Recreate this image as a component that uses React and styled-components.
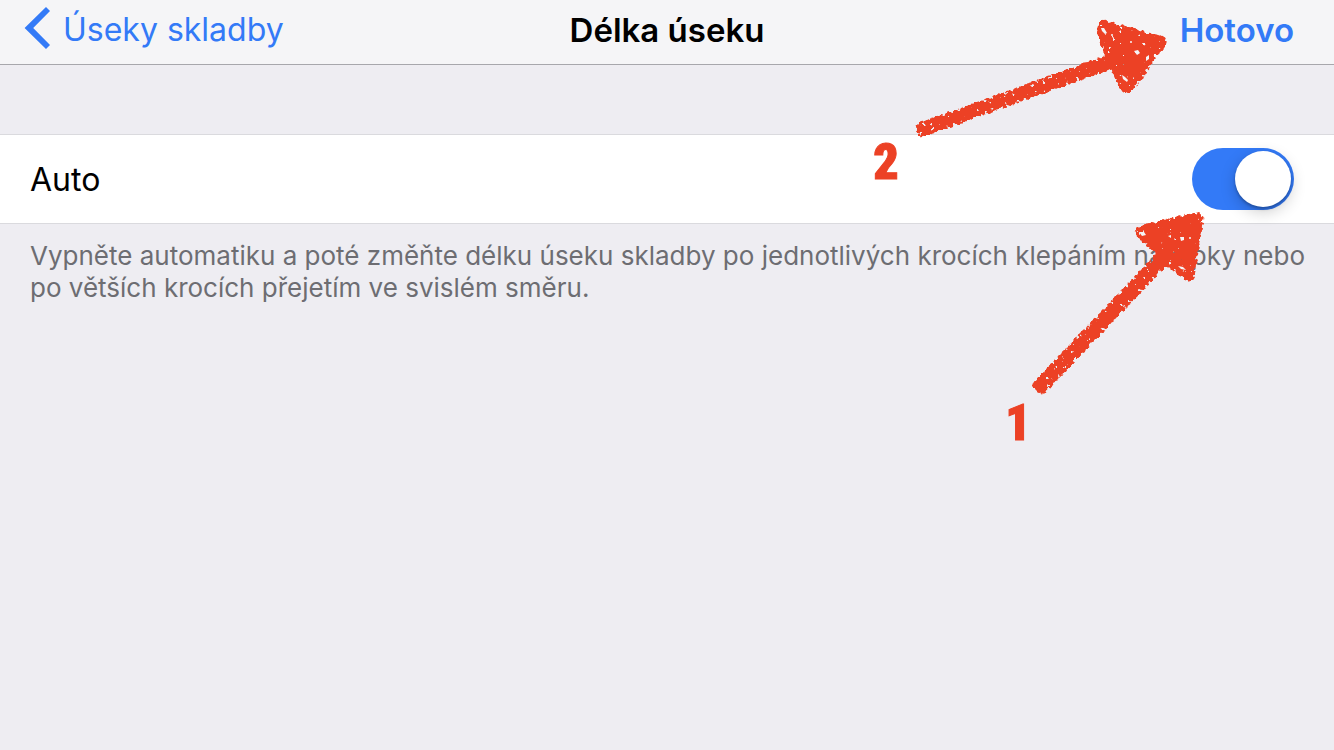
import React, { useState } from 'react';
import styled, { createGlobalStyle } from 'styled-components';

const GlobalStyle = createGlobalStyle`
  * {
    box-sizing: border-box;
  }
  body {
    margin: 0;
    background-color: #eeedf2;
    font-family: Inter, 'Liberation Sans', sans-serif;
  }
`;

const Page = styled.div`
  position: relative;
  min-height: 100vh;
  overflow: hidden;
`;
const NavBar = styled.header`
  display: grid;
  grid-template-columns: 1fr auto 1fr;
  align-items: center;
  padding: 0 24px 4px;
  height: 65px;
  background-color: #f5f5f7;
  border-bottom: 1px solid #a7a7ac;
`;
const NavButton = styled.button`
  display: flex;
  align-items: center;
  gap: 12px;
  justify-self: ${(props) => props.$side};
  padding: 0 ${(props) => (props.$side === 'end' ? 16 : 0)}px 0 0;
  border: none;
  background: none;
  color: #337af7;
  font-family: inherit;
  font-size: ${(props) => (props.$bold ? 33 : 32)}px;
  font-weight: ${(props) => (props.$bold ? 600 : 400)};
  line-height: 40px;
  white-space: nowrap;
  cursor: pointer;

  svg {
    margin-bottom: 4px;
  }
`;
const Title = styled.h1`
  margin: 0;
  color: #000;
  font-size: 33px;
  font-weight: 600;
  line-height: 40px;
`;
const Row = styled.label`
  display: flex;
  align-items: center;
  justify-content: space-between;
  margin-top: 69px;
  padding: 0 40px 0 30px;
  height: 90px;
  background-color: #fff;
  border-top: 1px solid #dadade;
  border-bottom: 1px solid #dadade;
  color: #000;
  font-size: 32px;
`;
const Switch = styled.input`
  appearance: none;
  display: flex;
  justify-content: ${(props) => (props.checked ? 'flex-end' : 'flex-start')};
  margin: 0;
  padding: 3px;
  width: 102px;
  height: 62px;
  border-radius: 31px;
  background-color: ${(props) => (props.checked ? '#337af7' : '#e5e5ea')};
  cursor: pointer;

  &::before {
    content: '';
    width: 56px;
    height: 56px;
    border-radius: 50%;
    background-color: #fff;
    box-shadow: 0 5px 16px rgba(0, 0, 0, 0.2), 0 2px 3px rgba(0, 0, 0, 0.25);
  }
`;
const Note = styled.p`
  margin: 0;
  padding: 16px 24px 16px 30px;
  color: #6d6d72;
  font-size: 26px;
  line-height: 32px;
`;
const Marks = styled.svg`
  position: absolute;
  top: 0;
  right: 0;
  pointer-events: none;
`;
const Digit = styled.text`
  fill: #ec4125;
  stroke: #ec4125;
  stroke-width: 1px;
  font-family: 'Roboto Condensed', 'Open Sans Condensed', Roboto, sans-serif;
  font-size: 50px;
  font-weight: 900;
  text-anchor: middle;
`;

function Chevron() {
  return (
    <svg width="27" height="42" viewBox="0 0 27 42" aria-hidden="true">
      <path d="M22 0 26 4 9.2 21 26 38 22 42 .6 21Z" fill="#337af7" />
    </svg>
  );
}

// Hand drawn arrows and step numbers, pinned to the right edge with the controls
function Annotations() {
  return (
    <Marks width="480" height="460" viewBox="854 0 480 460">
      <defs>
        <filter
          id="crayon"
          filterUnits="userSpaceOnUse"
          x="854"
          y="0"
          width="480"
          height="460"
          colorInterpolationFilters="sRGB"
        >
          <feGaussianBlur in="SourceAlpha" stdDeviation="2.4" result="soft" />
          <feTurbulence
            type="fractalNoise"
            baseFrequency="0.26"
            numOctaves="2"
            seed="8"
          />
          <feColorMatrix
            values="0 0 0 0 0  0 0 0 0 0  0 0 0 0 0  0 0 0 1 0"
            result="noise"
          />
          <feComposite
            in="soft"
            in2="noise"
            operator="arithmetic"
            k1="4"
            k2="-0.5"
          />
          <feComponentTransfer result="grain">
            <feFuncA type="linear" slope="6" intercept="-2.4" />
          </feComponentTransfer>
          <feFlood floodColor="#ec4125" />
          <feComposite in2="grain" operator="in" />
        </filter>
      </defs>
      <g filter="url(#crayon)" strokeLinejoin="round">
        <path d="M918 131 1112 61" stroke="#000" strokeWidth="12" />
        <path d="M1037 390 1164 257" stroke="#000" strokeWidth="13" />
        <path d="M1098 22 1103 21 1131 29 1165 38 1167 42 1153 59 1146 72 1129 93 1124 93 1112 70 1106 54 1099 36Z" />
        <path d="M1135 230 1141 227 1167 220 1198 213 1203 216 1199 239 1196 256 1193 279 1188 281 1168 265 1155 251 1141 240Z" />
      </g>
      <g fill="#f5f5f7">
        <path d="M1101 28 1104 28 1107 33 1105 34 1102 31Z" />
        <path d="M1134 51 1138 50 1140 53 1137 55Z" />
        <path d="M1122 75 1125 77 1128 80 1127 82 1123 79Z" />
        <path d="M1146 57 1149 55 1149 59 1146 61Z" />
        <circle cx="1112" cy="35" r="1" />
        <circle cx="1131" cy="42" r="1" />
        <path d="M1139 232 1144 232 1146 235 1142 236Z" />
        <path d="M1180 237 1184 237 1184 240 1181 241Z" />
        <path d="M1178 266 1183 267 1186 270 1181 269Z" />
        <path d="M1168 236 1171 235 1171 238Z" />
        <circle cx="1190" cy="238" r="1" />
      </g>
      <Digit x="886" y="179">
        2
      </Digit>
      <Digit x="1018" y="440">
        1
      </Digit>
    </Marks>
  );
}

export default function App() {
  const [auto, setAuto] = useState(true);

  return (
    <Page>
      <GlobalStyle />
      <NavBar>
        <NavButton type="button" $side="start">
          <Chevron />
          Úseky skladby
        </NavButton>
        <Title>Délka úseku</Title>
        <NavButton type="button" $side="end" $bold>
          Hotovo
        </NavButton>
      </NavBar>
      <main>
        <Row>
          Auto
          <Switch
            type="checkbox"
            role="switch"
            checked={auto}
            onChange={(e) => setAuto(e.target.checked)}
          />
        </Row>
        <Note>
          Vypněte automatiku a poté změňte délku úseku skladby po jednotlivých
          krocích klepáním na šipky nebo po větších krocích přejetím ve svislém
          směru.
        </Note>
      </main>
      <Annotations />
    </Page>
  );
}
